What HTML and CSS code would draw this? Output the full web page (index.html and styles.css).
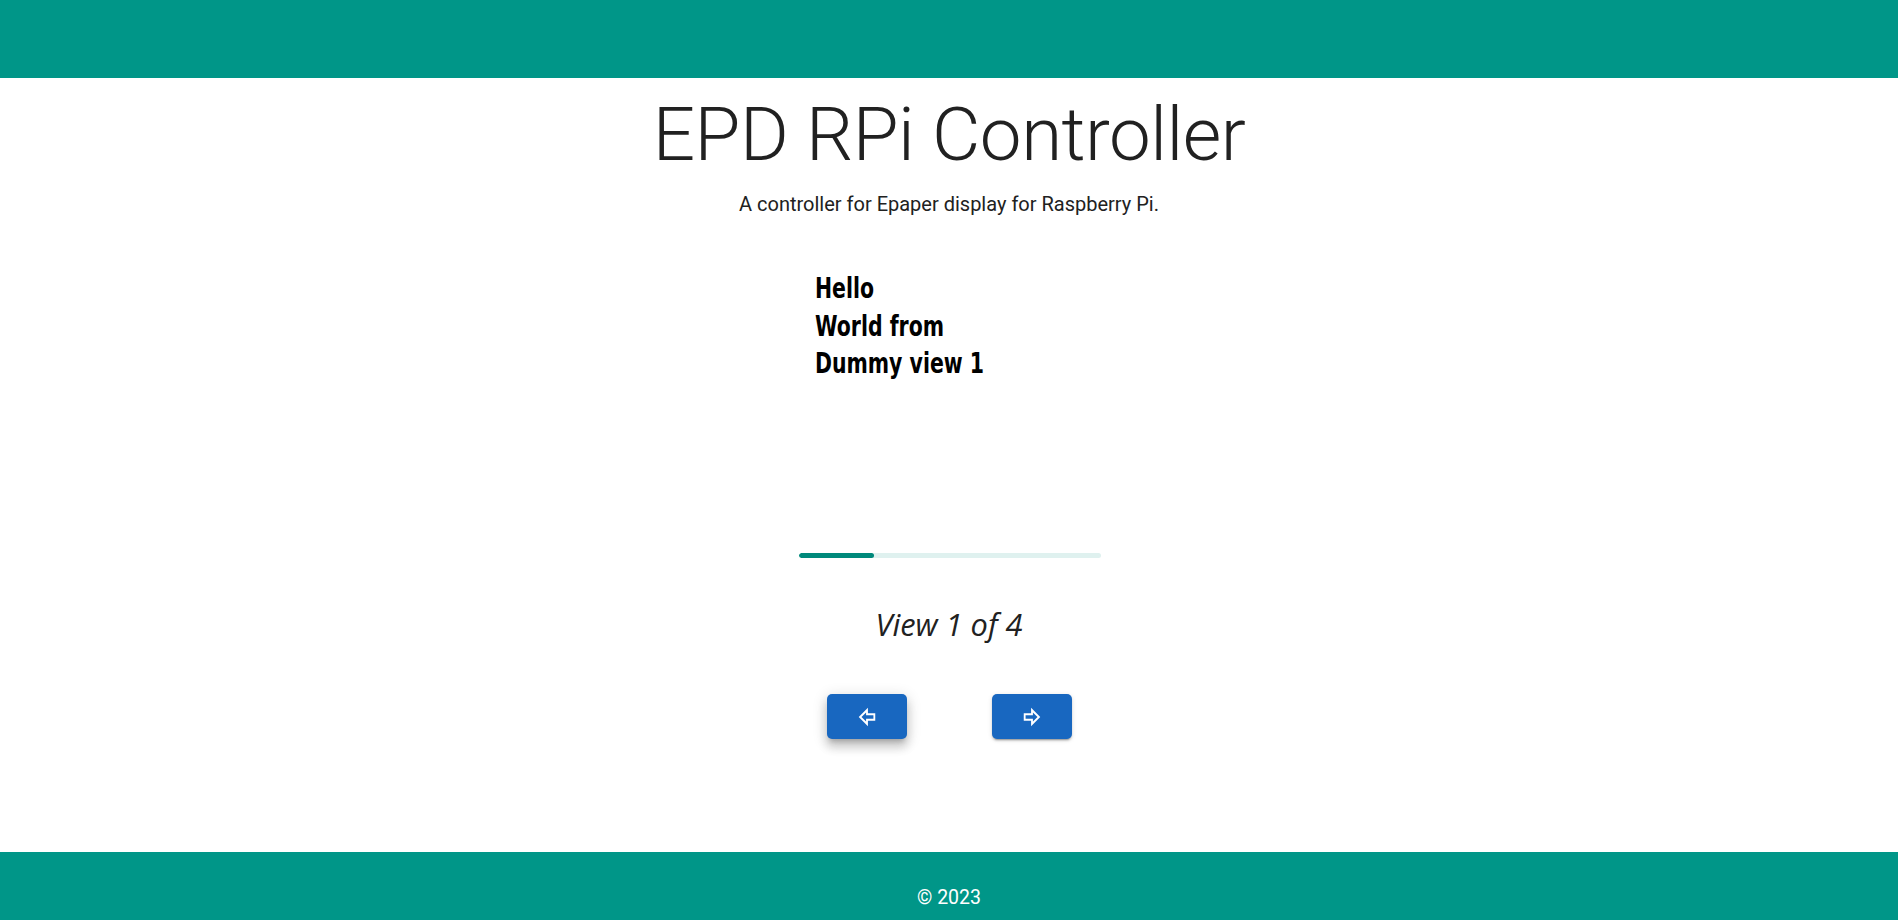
FILE: index.html
```html
<!DOCTYPE html>
<html lang="en">
<head>
<meta charset="utf-8">
<title>EPD RPi Controller</title>
<link rel="stylesheet" href="styles.css">
</head>
<body>
<div class="app">
  <header class="app-bar"></header>
  <main class="main">
    <h1 class="title">EPD RPi Controller</h1>
    <p class="subtitle">A controller for Epaper display for Raspberry Pi.</p>
    <div class="preview">
      <div class="preview-text">Hello<br>World from<br>Dummy view 1</div>
    </div>
    <div class="progress"><div class="progress-fill" style="width:25%"></div></div>
    <p class="view-label">View 1 of 4</p>
    <div class="nav">
      <button class="btn btn-focused" aria-label="Previous">
        <svg viewBox="0 0 24 24" width="24" height="24"><path fill="#fff" d="M13,22L3,12L13,2V8H21V16H13V22M6,12L11,17V14H19V10H11V7L6,12Z"/></svg>
      </button>
      <button class="btn" aria-label="Next">
        <svg viewBox="0 0 24 24" width="24" height="24"><path fill="#fff" d="M11,16H3V8H11V2L21,12L11,22V16M13,7V10H5V14H13V17L18,12L13,7Z"/></svg>
      </button>
    </div>
  </main>
  <footer class="footer">© 2023</footer>
</div>
</body>
</html>
```
FILE: styles.css
```css
* { box-sizing: border-box; }
html, body { margin: 0; padding: 0; }
body {
  font-family: Roboto, "Liberation Sans", sans-serif;
  color: #212121;
  background: #fff;
}
.app {
  display: flex;
  flex-direction: column;
  min-height: 100vh;
}
.app-bar {
  height: 78px;
  background: #009688;
}
.main {
  flex: 1;
  display: flex;
  flex-direction: column;
  align-items: center;
}
.title {
  margin: 12px 0 0;
  font-weight: 300;
  font-size: 74.5px;
  line-height: 90px;
  letter-spacing: -0.5px;
}
.subtitle {
  margin: 11px 0 0;
  font-size: 20px;
  line-height: 26px;
}
.preview {
  width: 302px;
  height: 301px;
  margin-top: 35px;
  margin-left: 1px;
  padding: 18px 0 0 16px;
}
.preview-text {
  font-family: "DejaVu Sans", sans-serif;
  font-weight: bold;
  font-size: 28px;
  line-height: 37.5px;
  color: #000;
  transform: scaleX(0.73);
  transform-origin: left top;
  white-space: nowrap;
}
.progress {
  width: 302px;
  height: 5px;
  border-radius: 3px;
  background: #dff1ef;
  overflow: hidden;
  margin-left: 1px;
}
.progress-fill {
  height: 100%;
  background: #00897b;
  border-radius: 3px;
}
.view-label {
  margin: 46px 0 0;
  font-family: "Open Sans", sans-serif;
  font-style: italic;
  font-size: 30.8px;
  line-height: 40px;
  color: #212121;
}
.nav {
  display: flex;
  gap: 85px;
  margin-top: 50px;
  margin-left: 1px;
}
.btn {
  width: 80px;
  height: 45px;
  border: none;
  border-radius: 5px;
  background: #1867c0;
  display: flex;
  align-items: center;
  justify-content: center;
  padding: 0;
  box-shadow: 0 3px 1px -2px rgba(0,0,0,.2), 0 2px 2px 0 rgba(0,0,0,.14), 0 1px 5px 0 rgba(0,0,0,.12);
}
.btn-focused {
  box-shadow: 0 5px 5px -3px rgba(0,0,0,.2), 0 8px 10px 1px rgba(0,0,0,.14), 0 3px 14px 2px rgba(0,0,0,.12);
}
.btn svg { width: 22px; height: 22px; }
.footer {
  height: 68px;
  background: #009688;
  color: #fff;
  font-size: 19.5px;
  display: flex;
  align-items: flex-end;
  justify-content: center;
  padding-bottom: 11px;
}
```
